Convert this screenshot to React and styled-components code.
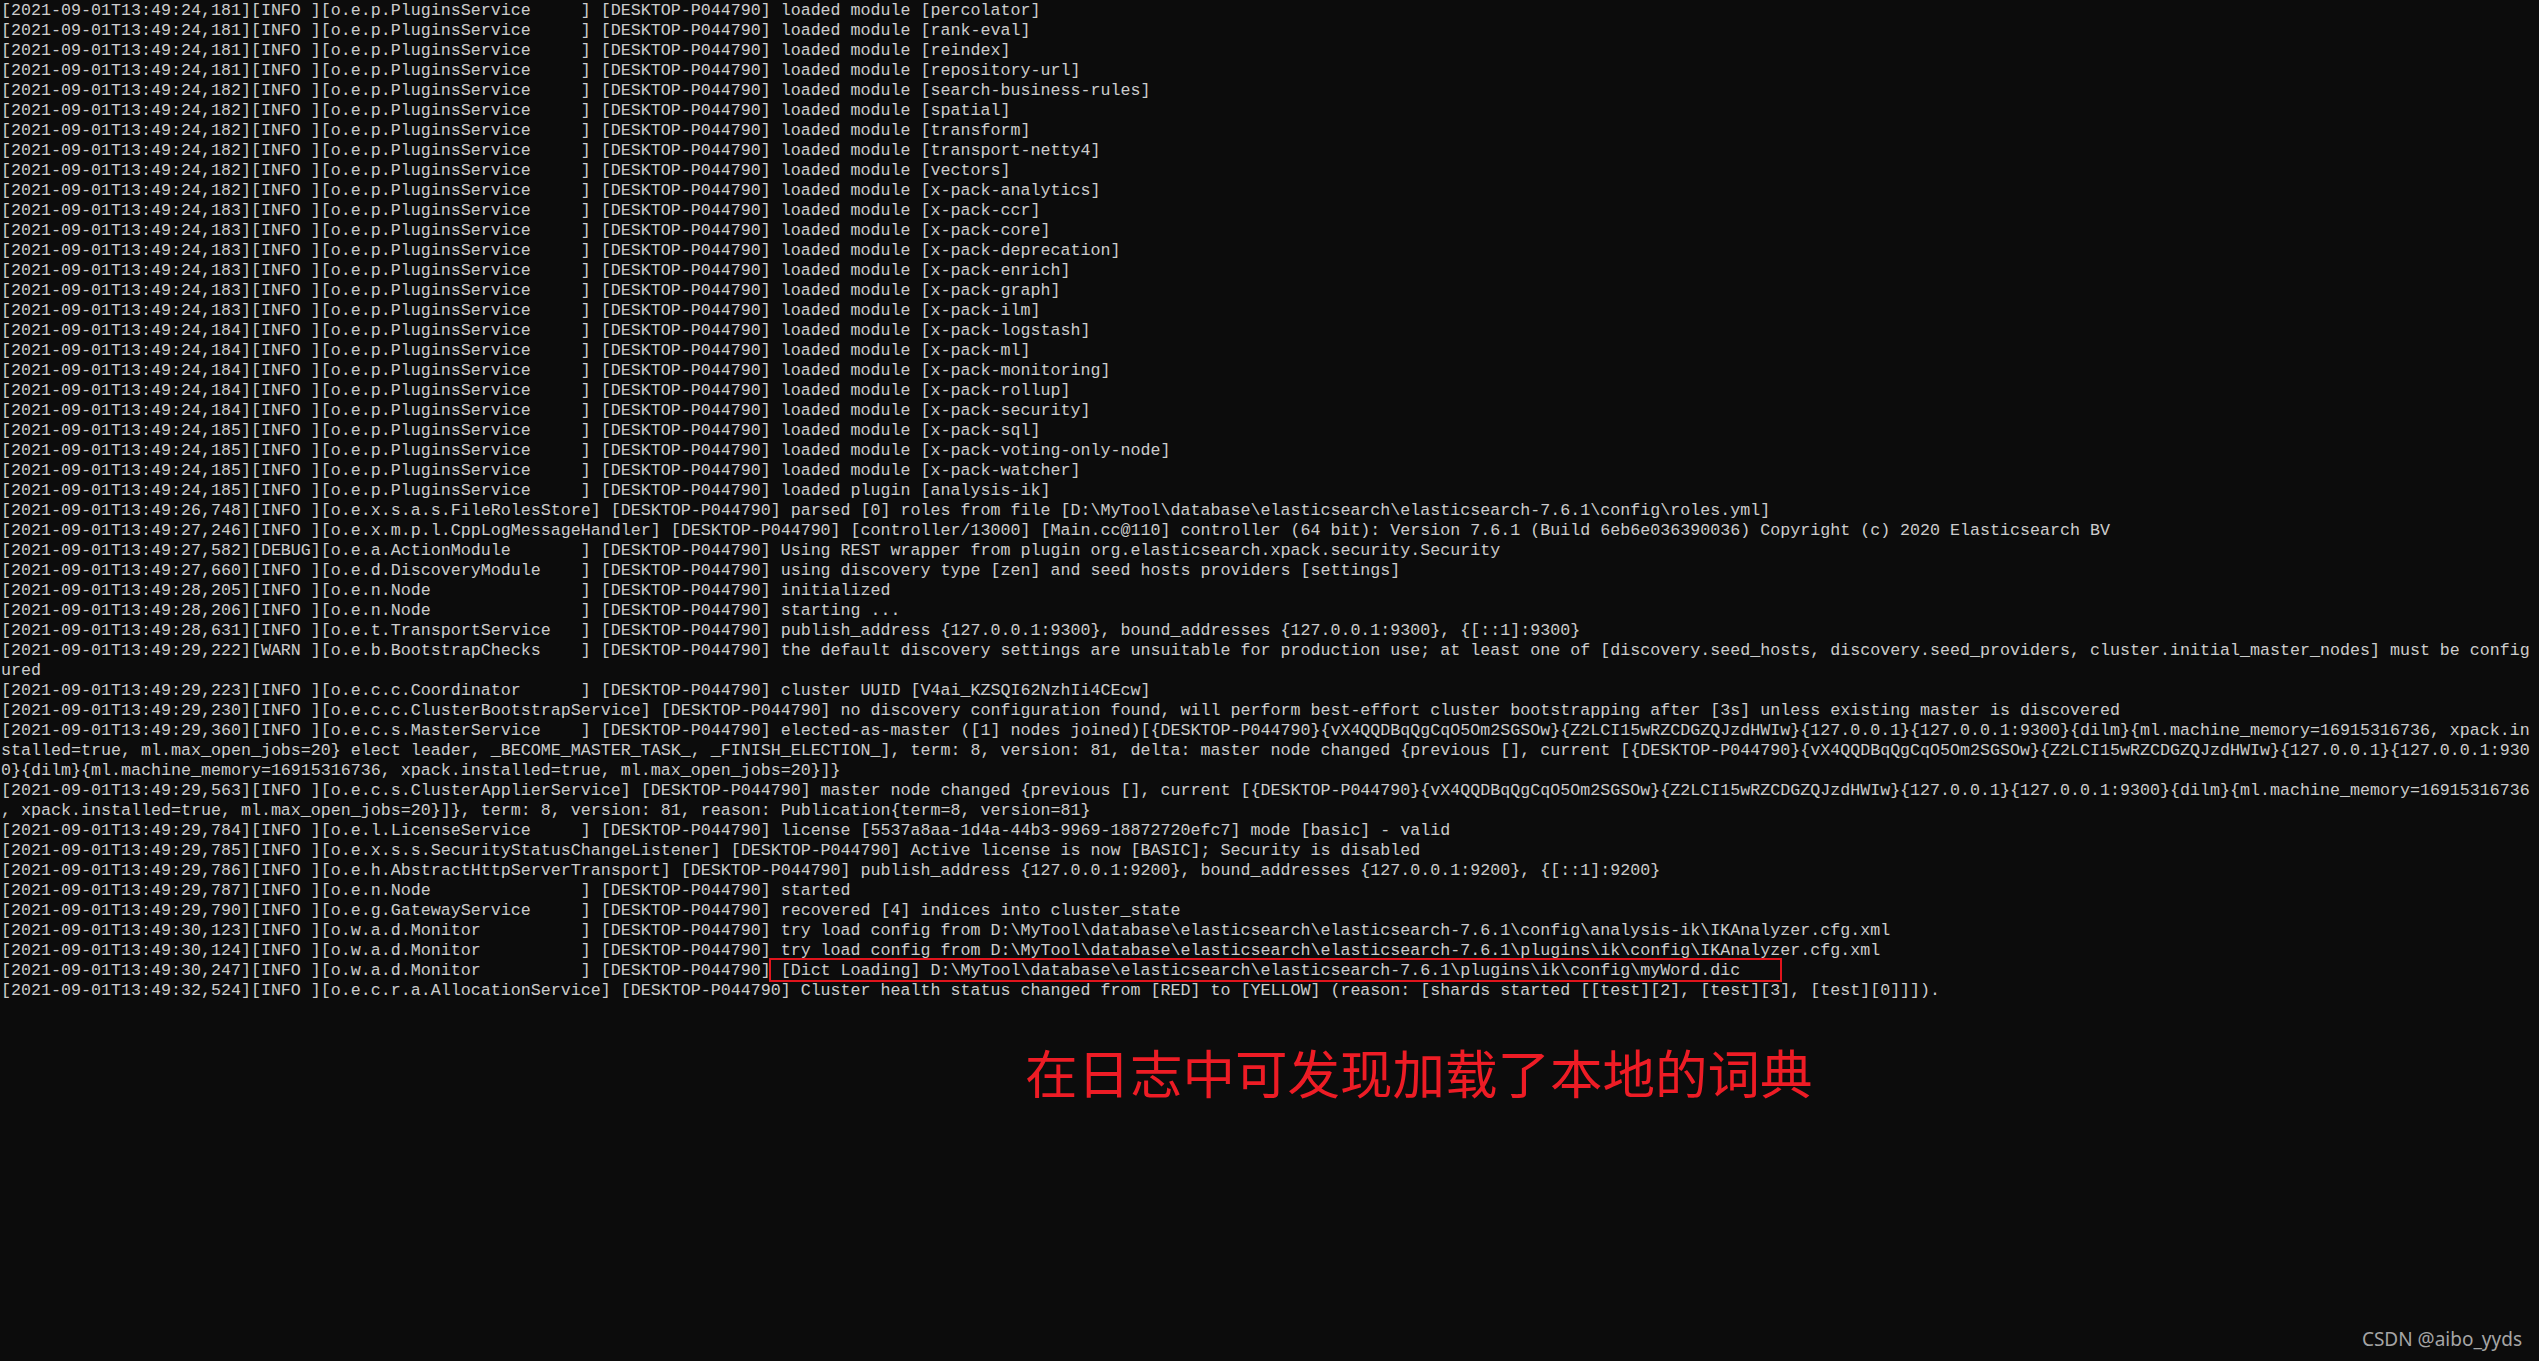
import React from 'react';
import styled, { createGlobalStyle } from 'styled-components';

const GlobalStyle = createGlobalStyle`
  html, body {
    margin: 0;
    padding: 0;
    background: #0c0c0c;
  }
`;

const Screen = styled.div`
  display: flex;
  flex-direction: column;
  width: 2539px;
  height: 1361px;
  background: #0c0c0c;
  overflow: hidden;
`;

const Log = styled.div`
  display: flex;
  flex-direction: column;
  padding: 1px 0 0 1px;
  font-family: "Liberation Mono", "DejaVu Sans Mono", monospace;
  font-size: 16.667px;
  color: #cccccc;
`;

const Line = styled.div`
  position: relative;
  height: 20px;
  line-height: 20px;
  white-space: pre;
`;

const Highlight = styled.span`
  position: absolute;
  left: 768px;
  top: -3px;
  width: 1013px;
  height: 24px;
  border: 2px solid #e0141c;
  box-sizing: border-box;
  pointer-events: none;
`;

const Caption = styled.div`
  margin-top: 44px;
  padding-left: 1025px;
  font-family: "Noto Sans CJK SC", "Noto Sans", sans-serif;
  font-size: 52.5px;
  line-height: 52px;
  color: #ee1c25;
`;

const Watermark = styled.div`
  margin-top: auto;
  align-self: flex-end;
  padding: 0 17px 9px 0;
  font-family: "Noto Sans", "Open Sans", sans-serif;
  font-size: 19px;
  color: #a5a5a5;
`;

const ts = (t, lvl = 'INFO ') => `[2021-09-01T13:49:${t}][${lvl}]`;
const host = '[DESKTOP-P044790]';
const pad = (name) => `[${name.padEnd(25, ' ')}]`;

const modules = [
  ['24,181', 'percolator'],
  ['24,181', 'rank-eval'],
  ['24,181', 'reindex'],
  ['24,181', 'repository-url'],
  ['24,182', 'search-business-rules'],
  ['24,182', 'spatial'],
  ['24,182', 'transform'],
  ['24,182', 'transport-netty4'],
  ['24,182', 'vectors'],
  ['24,182', 'x-pack-analytics'],
  ['24,183', 'x-pack-ccr'],
  ['24,183', 'x-pack-core'],
  ['24,183', 'x-pack-deprecation'],
  ['24,183', 'x-pack-enrich'],
  ['24,183', 'x-pack-graph'],
  ['24,183', 'x-pack-ilm'],
  ['24,184', 'x-pack-logstash'],
  ['24,184', 'x-pack-ml'],
  ['24,184', 'x-pack-monitoring'],
  ['24,184', 'x-pack-rollup'],
  ['24,184', 'x-pack-security'],
  ['24,185', 'x-pack-sql'],
  ['24,185', 'x-pack-voting-only-node'],
  ['24,185', 'x-pack-watcher'],
];

const esPath = 'D:\\MyTool\\database\\elasticsearch\\elasticsearch-7.6.1';
const nodeInfo =
  '{DESKTOP-P044790}{vX4QQDBqQgCqO5Om2SGSOw}{Z2LCI15wRZCDGZQJzdHWIw}{127.0.0.1}';

const lines = [
  ...modules.map(
    ([t, m]) => `${ts(t)}${pad('o.e.p.PluginsService')} ${host} loaded module [${m}]`
  ),
  `${ts('24,185')}${pad('o.e.p.PluginsService')} ${host} loaded plugin [analysis-ik]`,
  `${ts('26,748')}[o.e.x.s.a.s.FileRolesStore] ${host} parsed [0] roles from file [${esPath}\\config\\roles.yml]`,
  `${ts('27,246')}[o.e.x.m.p.l.CppLogMessageHandler] ${host} [controller/13000] [Main.cc@110] controller (64 bit): Version 7.6.1 (Build 6eb6e036390036) Copyright (c) 2020 Elasticsearch BV`,
  `${ts('27,582', 'DEBUG')}${pad('o.e.a.ActionModule')} ${host} Using REST wrapper from plugin org.elasticsearch.xpack.security.Security`,
  `${ts('27,660')}${pad('o.e.d.DiscoveryModule')} ${host} using discovery type [zen] and seed hosts providers [settings]`,
  `${ts('28,205')}${pad('o.e.n.Node')} ${host} initialized`,
  `${ts('28,206')}${pad('o.e.n.Node')} ${host} starting ...`,
  `${ts('28,631')}${pad('o.e.t.TransportService')} ${host} publish_address {127.0.0.1:9300}, bound_addresses {127.0.0.1:9300}, {[::1]:9300}`,
  `${ts('29,222', 'WARN ')}${pad('o.e.b.BootstrapChecks')} ${host} the default discovery settings are unsuitable for production use; at least one of [discovery.seed_hosts, discovery.seed_providers, cluster.initial_master_nodes] must be config`,
  'ured',
  `${ts('29,223')}${pad('o.e.c.c.Coordinator')} ${host} cluster UUID [V4ai_KZSQI62NzhIi4CEcw]`,
  `${ts('29,230')}[o.e.c.c.ClusterBootstrapService] ${host} no discovery configuration found, will perform best-effort cluster bootstrapping after [3s] unless existing master is discovered`,
  `${ts('29,360')}${pad('o.e.c.s.MasterService')} ${host} elected-as-master ([1] nodes joined)[${nodeInfo}{127.0.0.1:9300}{dilm}{ml.machine_memory=16915316736, xpack.in`,
  `stalled=true, ml.max_open_jobs=20} elect leader, _BECOME_MASTER_TASK_, _FINISH_ELECTION_], term: 8, version: 81, delta: master node changed {previous [], current [${nodeInfo}{127.0.0.1:930`,
  '0}{dilm}{ml.machine_memory=16915316736, xpack.installed=true, ml.max_open_jobs=20}]}',
  `${ts('29,563')}[o.e.c.s.ClusterApplierService] ${host} master node changed {previous [], current [${nodeInfo}{127.0.0.1:9300}{dilm}{ml.machine_memory=16915316736`,
  ', xpack.installed=true, ml.max_open_jobs=20}]}, term: 8, version: 81, reason: Publication{term=8, version=81}',
  `${ts('29,784')}${pad('o.e.l.LicenseService')} ${host} license [5537a8aa-1d4a-44b3-9969-18872720efc7] mode [basic] - valid`,
  `${ts('29,785')}[o.e.x.s.s.SecurityStatusChangeListener] ${host} Active license is now [BASIC]; Security is disabled`,
  `${ts('29,786')}[o.e.h.AbstractHttpServerTransport] ${host} publish_address {127.0.0.1:9200}, bound_addresses {127.0.0.1:9200}, {[::1]:9200}`,
  `${ts('29,787')}${pad('o.e.n.Node')} ${host} started`,
  `${ts('29,790')}${pad('o.e.g.GatewayService')} ${host} recovered [4] indices into cluster_state`,
  `${ts('30,123')}${pad('o.w.a.d.Monitor')} ${host} try load config from ${esPath}\\config\\analysis-ik\\IKAnalyzer.cfg.xml`,
  `${ts('30,124')}${pad('o.w.a.d.Monitor')} ${host} try load config from ${esPath}\\plugins\\ik\\config\\IKAnalyzer.cfg.xml`,
  { text: `${ts('30,247')}${pad('o.w.a.d.Monitor')} ${host} [Dict Loading] ${esPath}\\plugins\\ik\\config\\myWord.dic`, marked: true },
  `${ts('32,524')}[o.e.c.r.a.AllocationService] ${host} Cluster health status changed from [RED] to [YELLOW] (reason: [shards started [[test][2], [test][3], [test][0]]]).`,
];

export default function App() {
  return (
    <>
      <GlobalStyle />
      <Screen>
        <Log>
          {lines.map((l, i) =>
            typeof l === 'string' ? (
              <Line key={i}>{l}</Line>
            ) : (
              <Line key={i}>
                {l.text}
                <Highlight />
              </Line>
            )
          )}
        </Log>
        <Caption>在日志中可发现加载了本地的词典</Caption>
        <Watermark>CSDN @aibo_yyds</Watermark>
      </Screen>
    </>
  );
}
